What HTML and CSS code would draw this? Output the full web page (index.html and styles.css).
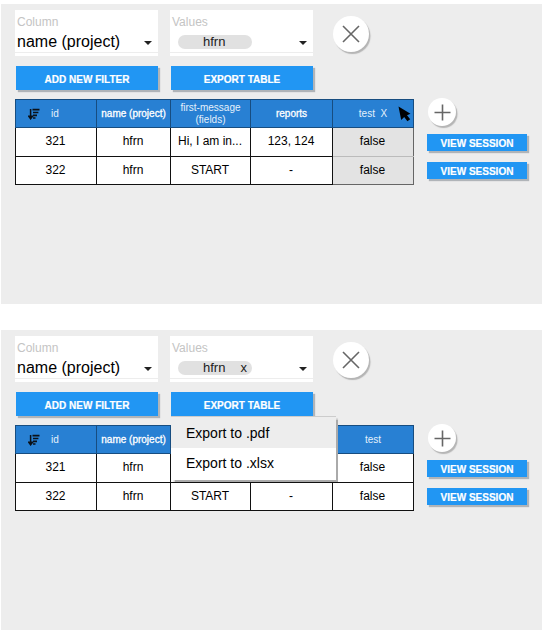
FILE: index.html
```html
<!DOCTYPE html>
<html lang="en">
<head>
<meta charset="utf-8">
<title>Sessions</title>
<link rel="stylesheet" href="styles.css">
</head>
<body>
<svg width="0" height="0" class="defs">
  <symbol id="sort" viewBox="0 0 12 12"><path d="M2.6 1v8.2M.7 8.2h3.8L2.6 10.8z" stroke="#0b1118" stroke-width="1.5" fill="#0b1118"/><path d="M4.5 1.7h7M5 4.5h5.4M5 7.3h4M5 10h2.5" stroke="#0b1118" stroke-width="1.7" fill="none"/></symbol>
</svg>

<section class="panel">
  <div class="filters">
    <div class="field"><span class="label">Column</span><div class="value"><span>name (project)</span><i class="caret"></i></div></div>
    <div class="field"><span class="label">Values</span><div class="value"><span class="chip"><span>hfrn</span></span><i class="caret"></i></div></div>
    <button class="round large"><svg width="18" height="18" viewBox="0 0 18 18"><path d="M1 1l16 16M17 1L1 17"/></svg></button>
  </div>
  <div class="actions">
    <button class="btn">ADD NEW FILTER</button>
    <div class="export"><button class="btn">EXPORT TABLE</button></div>
  </div>
  <div class="content">
    <table>
      <colgroup><col class="c1"><col class="c2"><col class="c3"><col class="c4"><col class="c5"></colgroup>
      <thead><tr><th><div class="sorted"><svg width="12" height="12"><use href="#sort"/></svg>id</div></th><th class="strong">name (project)</th><th>first-message (fields)</th><th class="strong">reports</th><th class="hover">test&nbsp; X<svg class="cursor" width="13" height="16" viewBox="0 0 13 16"><path d="M.5.5L12.5 7.8L9 9.2L12.2 13.2L9.4 15.2L6.2 11L3.2 14z"/></svg></th></tr></thead>
      <tbody>
        <tr><td>321</td><td>hfrn</td><td>Hi, I am in...</td><td>123, 124</td><td class="hover">false</td></tr>
        <tr><td>322</td><td>hfrn</td><td>START</td><td>-</td><td class="hover">false</td></tr>
      </tbody>
    </table>
    <div class="side">
      <button class="round"><svg width="17" height="17" viewBox="0 0 17 17"><path d="M8.5.5v16M.5 8.5h16"/></svg></button>
      <button class="btn view">VIEW SESSION</button>
      <button class="btn view">VIEW SESSION</button>
    </div>
  </div>
</section>

<section class="panel">
  <div class="filters">
    <div class="field"><span class="label">Column</span><div class="value"><span>name (project)</span><i class="caret"></i></div></div>
    <div class="field"><span class="label">Values</span><div class="value"><span class="chip"><span>hfrn</span><span>x</span></span><i class="caret"></i></div></div>
    <button class="round large"><svg width="18" height="18" viewBox="0 0 18 18"><path d="M1 1l16 16M17 1L1 17"/></svg></button>
  </div>
  <div class="actions">
    <button class="btn">ADD NEW FILTER</button>
    <div class="export"><button class="btn">EXPORT TABLE</button>
      <div class="menu"><div class="item active">Export to .pdf</div><div class="item">Export to .xlsx</div></div>
    </div>
  </div>
  <div class="content">
    <table>
      <colgroup><col class="c1"><col class="c2"><col class="c3"><col class="c4"><col class="c5"></colgroup>
      <thead><tr><th><div class="sorted"><svg width="12" height="12"><use href="#sort"/></svg>id</div></th><th class="strong">name (project)</th><th></th><th></th><th>test</th></tr></thead>
      <tbody>
        <tr><td>321</td><td>hfrn</td><td></td><td></td><td>false</td></tr>
        <tr><td>322</td><td>hfrn</td><td>START</td><td>-</td><td>false</td></tr>
      </tbody>
    </table>
    <div class="side">
      <button class="round"><svg width="17" height="17" viewBox="0 0 17 17"><path d="M8.5.5v16M.5 8.5h16"/></svg></button>
      <button class="btn view">VIEW SESSION</button>
      <button class="btn view">VIEW SESSION</button>
    </div>
  </div>
</section>
</body>
</html>
```
FILE: styles.css
```css
* { box-sizing: border-box; }
body {
  margin: 0;
  padding: 4px 4px 0 1px;
  background: #fff;
  font-family: "Liberation Sans", Arial, sans-serif;
  color: #000;
  height: 630px;
  overflow: hidden;
}
button { border: 0; padding: 0; font-family: inherit; }
.defs { position: absolute; }
.panel {
  width: 541px;
  height: 300px;
  margin-bottom: 26px;
  padding: 6px 0 0 14px;
  background: #ededed;
}
.filters { display: flex; gap: 12px; height: 46px; }
.field {
  width: 143px;
  height: 46px;
  padding: 5px 2px 0 2px;
  background: linear-gradient(#fff 42px, #ededed 42px, #ededed 43px, #fff 43px);
}
.label { display: block; font-size: 12px; line-height: 14px; color: #c4c4c4; }
.value {
  display: flex;
  align-items: center;
  justify-content: space-between;
  height: 26px;
  padding-right: 4px;
  font-size: 16px;
}
.caret {
  border: 4.5px solid transparent;
  border-top-color: #222;
  border-bottom: 0;
  margin-top: 2px;
}
.chip {
  display: flex;
  gap: 15px;
  width: 74px;
  height: 14px;
  margin-left: 6px;
  padding-left: 25px;
  border-radius: 7px;
  background: #e1e1e1;
  color: #222;
  font-size: 13px;
  line-height: 14px;
}
.round {
  display: flex;
  align-items: center;
  justify-content: center;
  flex: none;
  width: 28px;
  height: 28px;
  border-radius: 50%;
  background: #fff;
  box-shadow: 1.5px 2px 1px #b5b5b5;
}
.round.large { width: 36px; height: 36px; margin: 5.5px 0 0 8px; }
.round path { stroke: #666; stroke-width: 1.6; fill: none; }
.actions { display: flex; gap: 13px; padding: 10px 0 0 1px; }
.btn {
  display: block;
  width: 142px;
  height: 24px;
  background: #2196f3;
  color: #fff;
  font-weight: bold;
  font-size: 10px;
  line-height: 27px;
  -webkit-text-stroke: 0.2px #fff;
  box-shadow: 2px 2px 1px #b0b4b8;
}
.export { position: relative; }
.menu {
  position: absolute;
  z-index: 2;
  top: 24px;
  left: 0;
  width: 165px;
  height: 64px;
  border-top: 1px solid #ccc;
  background: #fff;
  box-shadow: 1.5px 1.5px 1px #aaa;
}
.item { height: 31px; padding-left: 15px; font-size: 14px; line-height: 32px; }
.item.active { background: #ededed; }
.item:last-child { line-height: 31px; }
.content { display: flex; gap: 13px; padding-top: 9px; }
table {
  width: 399px;
  height: 86px;
  table-layout: fixed;
  border-collapse: collapse;
}
.c1 { width: 81px; }
.c2 { width: 74px; }
.c3 { width: 80px; }
.c4 { width: 82px; }
.c5 { width: 81px; }
th, td {
  padding: 0;
  border: 1px solid #111;
  text-align: center;
  vertical-align: middle;
}
th {
  height: 28px;
  border-color: #174d80;
  background: #2880d3;
  color: #e4f0fb;
  font-weight: normal;
  font-size: 10px;
  line-height: 12px;
}
th.strong { color: #fff; -webkit-text-stroke: 0.3px #fff; }
td { height: 26px; padding: 0 1px 2px 0; background: #fff; font-size: 12px; line-height: 14px; }
tbody tr:first-child td { height: 27px; }
td.hover { background: #e3e3e3; border-color: #666; }
tbody tr:first-child td.hover { border-bottom-color: #bbb; }
th.hover { position: relative; }
.cursor { position: absolute; right: 2px; top: 6px; }
.sorted { display: flex; align-items: center; justify-content: center; gap: 11px; margin-right: 25px; }
.side { width: 101px; }
.side .round { margin: -1px 0 8px 1px; }
.btn.view { width: 100px; height: 17px; line-height: 19px; font-size: 10px; margin-bottom: 11px; }
```
